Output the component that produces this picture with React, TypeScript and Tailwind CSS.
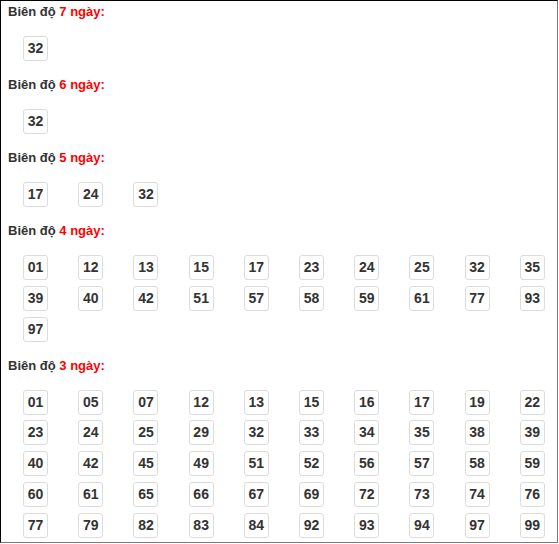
import React from "react";

const groups: { days: number; nums: string[] }[] = [
  { days: 7, nums: ["32"] },
  { days: 6, nums: ["32"] },
  { days: 5, nums: ["17", "24", "32"] },
  {
    days: 4,
    nums: ["01", "12", "13", "15", "17", "23", "24", "25", "32", "35", "39", "40", "42", "51", "57", "58", "59", "61", "77", "93", "97"],
  },
  {
    days: 3,
    nums: [
      "01", "05", "07", "12", "13", "15", "16", "17", "19", "22",
      "23", "24", "25", "29", "32", "33", "34", "35", "38", "39",
      "40", "42", "45", "49", "51", "52", "56", "57", "58", "59",
      "60", "61", "65", "66", "67", "69", "72", "73", "74", "76",
      "77", "79", "82", "83", "84", "92", "93", "94", "97", "99",
    ],
  },
];

export default function App() {
  return (
    <div
      className="w-[558px] h-[543px] border-l border-t border-l-black border-t-black border-r border-b border-r-[#7a7a7a] border-b-[#7a7a7a] bg-white overflow-hidden pt-[1px]"
      style={{ fontFamily: '"Liberation Sans", Arial, sans-serif' }}
    >
      {groups.map((g) => (
        <div key={g.days} className="mb-[14px]">
          <div className="h-[20px] leading-[20px] pl-[7px] text-[13px] font-bold text-[#333]">
            Biên độ <span className="text-[#ff0000]">{g.days} ngày:</span>
          </div>
          <div className="mt-[14px] ml-[7px] grid grid-cols-[repeat(10,55.2px)] gap-y-[5.8px] justify-items-center">
            {g.nums.map((n, i) => (
              <div
                key={i}
                className="w-[25px] h-[25px] border border-[#dcdcdc] rounded-[3px] flex items-center justify-center text-[14px] font-bold text-[#333]"
              >
                {n}
              </div>
            ))}
          </div>
        </div>
      ))}
    </div>
  );
}
